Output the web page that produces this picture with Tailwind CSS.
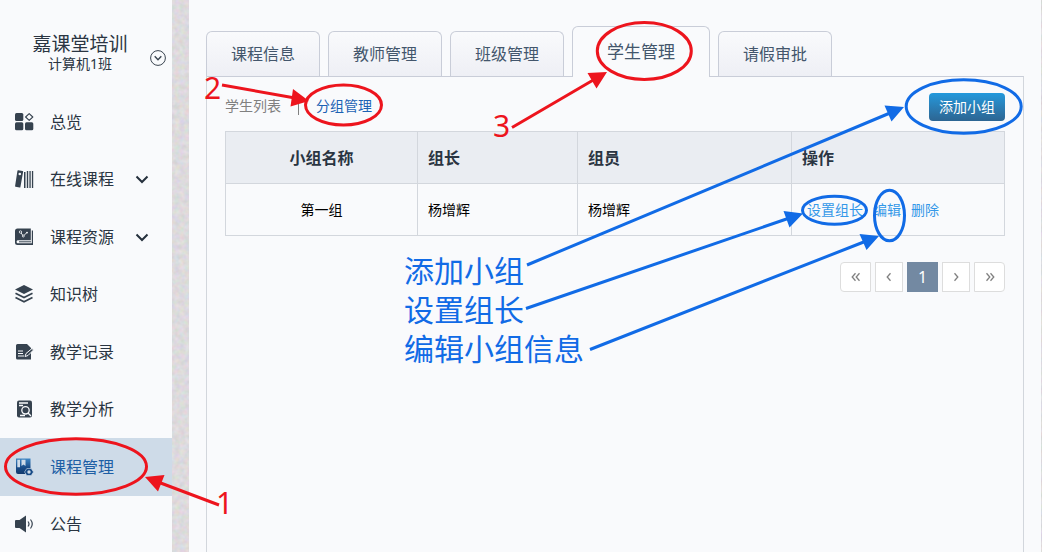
<!DOCTYPE html>
<html lang="zh-CN">
<head>
    <meta charset="UTF-8">
    <meta name="viewport" content="width=device-width, initial-scale=1.0">
    <title>分组管理 | 嘉课堂培训</title>
    <script src="https://cdn.jsdelivr.net/npm/@tailwindcss/browser@4"></script>
</head>
<body class="relative min-h-screen overflow-hidden bg-[#dcdadc] font-['Noto_Sans','Noto_Sans_CJK_SC',sans-serif] text-[#2a3542]">
    <!-- page texture -->
    <svg class="absolute inset-0 w-full h-full" aria-hidden="true">
        <filter id="grain" color-interpolation-filters="sRGB">
            <feTurbulence type="fractalNoise" baseFrequency="0.2" numOctaves="2" seed="4"/>
            <feColorMatrix values="0.13 0 0 0 0.80  0 0.11 0 0 0.80  0 0 0.13 0 0.80  0 0 0 0 1"/>
        </filter>
        <rect width="100%" height="100%" filter="url(#grain)"/>
    </svg>

    <div class="relative flex min-h-screen pr-px">
        <aside class="w-[172px] shrink-0 bg-[#f9fafc]">
            <div class="relative h-[93px] pt-8 pr-3 text-center">
                <h1 class="text-[19px] leading-6">嘉课堂培训</h1>
                <p class="text-sm leading-4">计算机1班</p>
                <button type="button" aria-label="切换班级" class="absolute right-1.5 top-[50px]">
                    <svg class="w-4 h-4" viewBox="0 0 16 16" fill="none" stroke="#3a4450">
                        <circle cx="8" cy="8" r="7.4"/>
                        <path d="M4.7 6.3L8 9.7l3.3-3.4" stroke-width="1.4"/>
                    </svg>
                </button>
            </div>
            <nav class="grid h-[460px] grid-rows-8 text-base">
                <a href="#" class="flex items-center gap-4 pl-[15px]">
                    <svg class="w-[19px] h-[18px]" viewBox="0 0 19 18" fill="#36424f">
                        <rect y="0" width="8.3" height="8" rx="1.5"/>
                        <rect y="9.3" width="8.3" height="8" rx="1.5"/>
                        <rect x="10" y="9.3" width="8.3" height="8" rx="1.5"/>
                        <path d="M14.2 .6L17.8 4l-3.6 3.4L10.6 4z" fill="none" stroke="#36424f" stroke-width="1.1" stroke-linejoin="round"/>
                    </svg>
                    总览
                </a>
                <a href="#" class="flex items-center gap-4 pl-[15px]">
                    <svg class="w-[19px] h-[18px]" viewBox="0 0 19 18" fill="#36424f">
                        <path d="M3.2.3l4.4.8a.6.6 0 0 1 .5.8L5.4 17a.6.6 0 0 1-.8.5L.6 16.8a.6.6 0 0 1-.5-.8L2.4.9a.7.7 0 0 1 .8-.6z"/>
                        <circle cx="4.8" cy="4" r="1.3" fill="#f9fafc"/>
                        <path d="M9 2h1.5v16H9zM11.8 1h1.4v17h-1.4zM14.4 1h1.3v17h-1.3zM16.9 1h1.3v17h-1.3z"/>
                    </svg>
                    在线课程
                    <svg class="ml-1 w-4 h-4" viewBox="0 0 16 16" fill="none" stroke="#25303c" stroke-width="2"><path d="M2.5 5.5L8 11l5.5-5.5"/></svg>
                </a>
                <a href="#" class="flex items-center gap-4 pl-[15px]">
                    <svg class="w-[19px] h-[18px]" viewBox="0 0 19 18" fill="#36424f">
                        <path d="M2.5.5h13.3v11.8H3.2c-1 0-1.6.5-1.6 1.5s.6 1.5 1.6 1.5H16.8V2.5H18V17H2.5A2.5 2.5 0 0 1 0 14.5V3A2.5 2.5 0 0 1 2.5.5z"/>
                        <path d="M4 13.3h12v1H4z"/>
                        <path d="M5.8 4.5l2.5 3.6 3.6-3.6" fill="none" stroke="#f9fafc" stroke-width=".9"/>
                        <g fill="#36424f" stroke="#f9fafc" stroke-width=".8"><circle cx="5.5" cy="4" r="1.2"/><circle cx="8.3" cy="8" r="1"/></g>
                        <circle cx="12" cy="4.6" r=".9" fill="#f9fafc"/>
                    </svg>
                    课程资源
                    <svg class="ml-1 w-4 h-4" viewBox="0 0 16 16" fill="none" stroke="#25303c" stroke-width="2"><path d="M2.5 5.5L8 11l5.5-5.5"/></svg>
                </a>
                <a href="#" class="flex items-center gap-4 pl-[15px]">
                    <svg class="w-[19px] h-[18px]" viewBox="0 0 19 18" fill="#36424f">
                        <path d="M9 0l9 4.5L9 9 0 4.5z"/>
                        <path d="M.5 8.3L9 12.5l8.5-4.2M.5 12.5L9 16.7l8.5-4.2" fill="none" stroke="#36424f" stroke-width="1.7"/>
                    </svg>
                    知识树
                </a>
                <a href="#" class="flex items-center gap-4 pl-[15px]">
                    <svg class="w-[19px] h-[18px]" viewBox="0 0 19 18" fill="#36424f">
                        <path d="M2.5 1H12l4 4v11.5H2.5A1.5 1.5 0 0 1 1 15V2.5A1.5 1.5 0 0 1 2.5 1z"/>
                        <path d="M3 8h5M3 10.5h5M3 13h6" stroke="#f9fafc" stroke-width="1"/>
                        <path d="M10 13.5l1-3 6-5 1.5 1.5-5.5 5.5z" stroke="#f9fafc" stroke-width="1"/>
                    </svg>
                    教学记录
                </a>
                <a href="#" class="flex items-center gap-4 pl-[15px]">
                    <svg class="w-[19px] h-[18px]" viewBox="0 0 19 18" fill="#36424f">
                        <rect x="2" y=".5" width="15" height="17" rx="2"/>
                        <g fill="none" stroke="#f9fafc" stroke-width="1.3"><path d="M4 3h9M4 5.5h4"/><circle cx="10.5" cy="10.3" r="3.7"/><path d="M13 13l3 3M5 15.5h5"/></g>
                    </svg>
                    教学分析
                </a>
                <a href="#" aria-current="page" class="flex items-center gap-4 bg-[#cedbe8] pl-[15px] text-[#1e5fa5]">
                    <svg class="w-[19px] h-[18px]" viewBox="0 0 19 18">
                        <linearGradient id="course" x2="0" y2="1">
                            <stop stop-color="#3f86c4"/>
                            <stop offset=".6" stop-color="#174a86"/>
                            <stop offset="1" stop-color="#123a6e"/>
                        </linearGradient>
                        <path d="M1 .5h14.5V11c-3 0-5 1.5-5 5H3a2 2 0 0 1-2-2z" fill="url(#course)"/>
                        <path d="M2.3 1.8H5v7.5H2.3zM6.5 1.8h4v6.2L8.5 6.5l-2 1.5z" fill="#cedbe8"/>
                        <path d="M11.8 10.5h4.4l2.3 3.5-2.3 3.5h-4.4L9.5 14z" fill="#174a86" stroke="#cedbe8" stroke-width=".6"/>
                        <circle cx="14" cy="14" r="1.7" fill="#cedbe8"/>
                    </svg>
                    课程管理
                </a>
                <a href="#" class="flex items-center gap-4 pl-[15px]">
                    <svg class="w-[19px] h-[18px]" viewBox="0 0 19 18" fill="#36424f">
                        <path d="M1 5h3.5L11 .5v17L4.5 13H1a1 1 0 0 1-1-1V6a1 1 0 0 1 1-1z"/>
                        <path d="M13 6.5q2 2.5 0 5M15.5 4.5q3.5 4.5 0 9" fill="none" stroke="#36424f" stroke-width="1.2"/>
                    </svg>
                    公告
                </a>
            </nav>
        </aside>

        <main class="ml-[17px] flex flex-1 flex-col bg-[#f9fafc] px-[17px] pt-[26px]">
            <div class="relative z-10 flex items-end gap-2 text-base text-[#43566c]">
                <a href="#" class="flex h-[45px] items-center rounded-t-md border border-b-0 border-[#c9cdd8] bg-linear-to-b from-[#f9fafc] to-[#eeeff5] px-6 mb-px">课程信息</a>
                <a href="#" class="flex h-[45px] items-center rounded-t-md border border-b-0 border-[#c9cdd8] bg-linear-to-b from-[#f9fafc] to-[#eeeff5] px-6 mb-px">教师管理</a>
                <a href="#" class="flex h-[45px] items-center rounded-t-md border border-b-0 border-[#c9cdd8] bg-linear-to-b from-[#f9fafc] to-[#eeeff5] px-6 mb-px">班级管理</a>
                <a href="#" aria-current="page" class="flex h-[51px] items-center rounded-t-md border border-b-0 border-[#c9cdd8] bg-[#f9fafc] px-[34px] text-[17px]">学生管理</a>
                <a href="#" class="flex h-[45px] items-center rounded-t-md border border-b-0 border-[#c9cdd8] bg-linear-to-b from-[#f9fafc] to-[#eeeff5] px-6 mb-px">请假审批</a>
            </div>

            <section class="-mt-px flex-1 border border-b-0 border-[#d2d6dc] border-t-[#c9cdd8] px-[18px] pt-4 text-sm">
                <div class="flex items-center justify-between">
                    <div class="flex items-center pb-0.5">
                        <a href="#" class="text-[#808080]">学生列表</a>
                        <span class="mx-[17px] h-[18px] w-px bg-[#808080]"></span>
                        <a href="#" class="text-[#1c62b4]">分组管理</a>
                    </div>
                    <button type="button" class="h-7 rounded bg-linear-to-b from-[#2299dc] to-[#2c6592] px-2.5 text-white">添加小组</button>
                </div>

                <table class="mt-2.5 w-full table-fixed border-collapse">
                    <thead>
                        <tr class="h-[52px] bg-[#eaedf2] text-left text-base">
                            <th class="w-[192px] border border-[#d3d7dd] text-center font-bold">小组名称</th>
                            <th class="w-[160px] border border-[#d3d7dd] pl-2.5 font-bold">组长</th>
                            <th class="w-[214px] border border-[#d3d7dd] pl-2.5 font-bold">组员</th>
                            <th class="border border-[#d3d7dd] pl-2.5 font-bold">操作</th>
                        </tr>
                    </thead>
                    <tbody>
                        <tr class="h-[52px] text-black">
                            <td class="border border-[#d3d7dd] text-center">第一组</td>
                            <td class="border border-[#d3d7dd] pl-2.5">杨增辉</td>
                            <td class="border border-[#d3d7dd] pl-2.5">杨增辉</td>
                            <td class="border border-[#d3d7dd] pl-[15px]">
                                <div class="flex gap-2.5 text-[#3498e8]">
                                    <a href="#">设置组长</a>
                                    <a href="#">编辑</a>
                                    <a href="#">删除</a>
                                </div>
                            </td>
                        </tr>
                    </tbody>
                </table>

                <div class="mt-[26px] flex justify-end gap-1 text-base text-[#808080]">
                    <button type="button" aria-label="首页" class="flex h-[30px] w-[31px] items-center justify-center rounded-l border border-[#dddddd] bg-white">
                        <svg class="w-3 h-3" viewBox="0 0 12 12" fill="none" stroke="#808080" stroke-width="1.3"><path d="M5.5 2.3L2.2 6l3.3 3.7M9.5 2.3L6.2 6l3.3 3.7"/></svg>
                    </button>
                    <button type="button" aria-label="上一页" class="flex h-[30px] w-7 items-center justify-center border border-[#dddddd] bg-white">
                        <svg class="w-3 h-3" viewBox="0 0 12 12" fill="none" stroke="#808080" stroke-width="1.3"><path d="M7.5 2.3L4.2 6l3.3 3.7"/></svg>
                    </button>
                    <button type="button" aria-current="page" class="flex h-[30px] w-[31px] items-center justify-center bg-[#7389a2] text-white">1</button>
                    <button type="button" aria-label="下一页" class="flex h-[30px] w-7 items-center justify-center border border-[#dddddd] bg-white">
                        <svg class="w-3 h-3" viewBox="0 0 12 12" fill="none" stroke="#808080" stroke-width="1.3"><path d="M4.5 2.3L7.8 6 4.5 9.7"/></svg>
                    </button>
                    <button type="button" aria-label="末页" class="flex h-[30px] w-[31px] items-center justify-center rounded-r border border-[#dddddd] bg-white">
                        <svg class="w-3 h-3" viewBox="0 0 12 12" fill="none" stroke="#808080" stroke-width="1.3"><path d="M2.5 2.3L5.8 6 2.5 9.7M6.5 2.3L9.8 6 6.5 9.7"/></svg>
                    </button>
                </div>
            </section>
        </main>
    </div>

    <!-- step markers drawn over the page -->
    <svg class="pointer-events-none absolute left-0 top-0 z-20 h-[552px] w-[1042px] text-[30px]" viewBox="0 0 1042 552">
        <g fill="none" stroke="#ed141d" stroke-width="3">
            <ellipse cx="76" cy="466.5" rx="70.5" ry="27.7"/>
            <ellipse cx="343.5" cy="105" rx="38" ry="20"/>
            <ellipse cx="644.3" cy="51" rx="47" ry="28.5"/>
            <path d="M219 505L158 482M222 85L295 98M512 127.5L595 79"/>
        </g>
        <g fill="#ed141d">
            <path d="M145 477l19.5-2-6.5 16.5zM309 101l-16-12-2.5 17.5zM607 72l-19.5 1 9 15.5z"/>
            <text x="216" y="514">1</text>
            <text x="204" y="99">2</text>
            <text x="493" y="137">3</text>
        </g>
        <g fill="none" stroke="#116be6" stroke-width="3">
            <ellipse cx="963.7" cy="106.5" rx="57.5" ry="26.7"/>
            <ellipse cx="834.5" cy="210.3" rx="32" ry="14"/>
            <ellipse cx="889.5" cy="215.5" rx="15" ry="25.3"/>
            <path d="M527 265L890 113M526 308.5L788 218.5M590 349.5L865 241.5"/>
        </g>
        <g fill="#116be6">
            <path d="M904 107l-19.5-1.5 7 16zM803 213.5l-19.5-2.5 6 16.5zM879 236l-19.5-2 7 16z"/>
            <text x="404" y="282">添加小组</text>
            <text x="404" y="321">设置组长</text>
            <text x="404" y="360">编辑小组信息</text>
        </g>
    </svg>
</body>
</html>
